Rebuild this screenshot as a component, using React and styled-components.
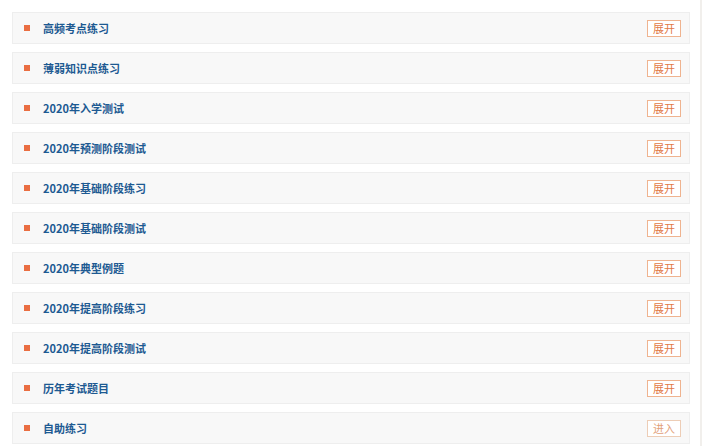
import React from "react";
import styled, { createGlobalStyle } from "styled-components";

const GlobalStyle = createGlobalStyle`
  body {
    margin: 0;
    background: #fff;
    font-family: "Microsoft YaHei", "Noto Sans CJK SC", sans-serif;
  }
`;

const items = [
  { title: "高频考点练习", action: "展开" },
  { title: "薄弱知识点练习", action: "展开" },
  { title: "2020年入学测试", action: "展开" },
  { title: "2020年预测阶段测试", action: "展开" },
  { title: "2020年基础阶段练习", action: "展开" },
  { title: "2020年基础阶段测试", action: "展开" },
  { title: "2020年典型例题", action: "展开" },
  { title: "2020年提高阶段练习", action: "展开" },
  { title: "2020年提高阶段测试", action: "展开" },
  { title: "历年考试题目", action: "展开" },
  { title: "自助练习", action: "进入", muted: true },
];

const Page = styled.div`
  width: 702px;
  height: 446px;
  box-sizing: border-box;
  padding: 12px 10px 0 12px;
  border-right: 2px solid #f1efec;
  overflow: hidden;
`;

const List = styled.div`
  display: flex;
  flex-direction: column;
  gap: 8px;
`;

const Row = styled.div`
  height: 32px;
  box-sizing: border-box;
  display: flex;
  align-items: center;
  padding: 0 8px 0 11px;
  background: #f8f8f8;
  border: 1px solid #eeeeee;
`;

const Bullet = styled.span`
  width: 6px;
  height: 6px;
  background: #ea6e42;
  margin-right: 13px;
  flex-shrink: 0;
`;

const Title = styled.span`
  flex: 1;
  font-size: 11px;
  font-weight: bold;
  color: #1d5a92;
`;

const Action = styled.button`
  height: 17px;
  padding: 0 5px;
  box-sizing: border-box;
  background: #fff;
  border: 1px solid ${(p) => (p.$muted ? "#edcdb6" : "#efb38f")};
  color: ${(p) => (p.$muted ? "#e2a07a" : "#e27845")};
  font-family: inherit;
  font-size: 11px;
  line-height: 15px;
  cursor: pointer;
`;

export default function App() {
  return (
    <>
      <GlobalStyle />
      <Page>
        <List>
          {items.map((it) => (
            <Row key={it.title}>
              <Bullet />
              <Title>{it.title}</Title>
              <Action $muted={it.muted}>{it.action}</Action>
            </Row>
          ))}
        </List>
      </Page>
    </>
  );
}
